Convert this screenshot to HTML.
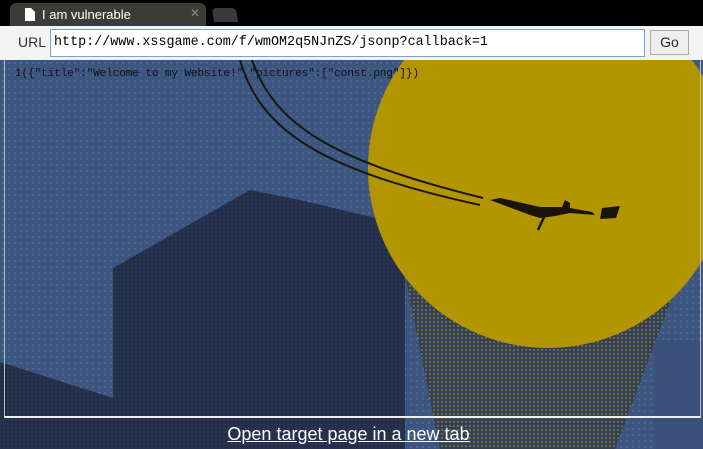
<!DOCTYPE html>
<html><head><meta charset="utf-8"><style>
html,body{margin:0;padding:0;width:703px;height:449px;overflow:hidden;background:#2a3858;font-family:"Liberation Sans",sans-serif}
#bg{position:absolute;left:0;top:0}
#top{position:absolute;left:0;top:0;width:703px;height:26px;background:#000}
#tab{position:absolute;left:10px;top:3px;width:196px;height:23px;background:#3b3b38;border-radius:6px 6px 0 0;color:#fff;font-size:13px}
#tab .t{position:absolute;left:32px;top:4px}
#tab .x{position:absolute;left:180px;top:3px;color:#888;font-size:12px}
#tab2{position:absolute;left:213px;top:8px;width:24px;height:14px;background:#3a3a3a;border-radius:4px 4px 0 0;transform:skewX(10deg)}
#bar{position:absolute;left:0;top:26px;width:703px;height:34px;background:#f3f3f3}
#url{position:absolute;left:18px;top:8px;font-size:14px;color:#333}
#in{position:absolute;left:50px;top:3px;background:#fff;border:1px solid #7a9ed6;font-family:"Liberation Mono",monospace;font-size:13.4px;line-height:25px;padding-left:3px;box-sizing:border-box;width:595px;height:28px}
#go{position:absolute;left:650px;top:4px;width:39px;height:25px;background:#eee;border:1px solid #aaa;box-sizing:border-box;font-size:14px;text-align:center;line-height:23px;color:#222}
#frame{position:absolute;left:4px;top:60px;width:697px;height:358px;border:1px solid #bbb;border-top:none;box-sizing:border-box;border-bottom:2px solid #eee}
#json{position:absolute;left:15px;top:68px;font-family:"Liberation Mono",monospace;font-size:11.2px;letter-spacing:-0.2px;color:#111}
#link{position:absolute;left:0;width:697px;top:424px;text-align:center;color:#fff;text-decoration:underline;font-size:18px}
</style></head><body>
<svg id="bg" width="703" height="449">
<defs>
<pattern id="d" width="4" height="4" patternUnits="userSpaceOnUse"><circle cx="2" cy="2" r="0.8" fill="#1a2236"/></pattern>
<pattern id="l" width="6" height="6" patternUnits="userSpaceOnUse"><circle cx="3" cy="3" r="0.9" fill="#5572a0"/></pattern>
<pattern id="y" width="4" height="4" patternUnits="userSpaceOnUse"><circle cx="2" cy="2" r="0.9" fill="#8a8a50"/></pattern>
</defs>
<rect width="703" height="449" fill="#3c5680"/>
<rect width="703" height="449" fill="url(#l)"/>
<polygon points="0,362 113,398 113,268 250,190 300,200 405,225 405,449 0,449" fill="#27324e"/>
<polygon points="0,362 113,398 113,268 250,190 300,200 405,225 405,449 0,449" fill="url(#d)"/>
<polygon points="400,250 690,250 615,449 440,449" fill="#343f52"/>
<polygon points="400,250 690,250 615,449 440,449" fill="url(#y)"/>
<rect x="655" y="340" width="48" height="109" fill="#3a5078"/>
<circle cx="548" cy="168" r="180" fill="#b39500"/>
<path d="M240,60 C260,130 320,170 480,205" stroke="#1a1510" stroke-width="2" fill="none"/>
<path d="M252,60 C275,125 330,160 483,198" stroke="#1a1510" stroke-width="2" fill="none"/>
<path d="M490,200 L500,198 L540,207 L562,207 L565,200 L570,203 L570,208 L592,212 L595,215 L570,213 L555,216 L540,218 L530,215 Z" fill="#1a1408"/>
<path d="M602,208 L620,206 L616,218 L600,219 Z" fill="#1a1408"/>
<path d="M545,215 L538,230" stroke="#1a1408" stroke-width="2.5"/>
</svg>
<div id="top"></div>
<div id="tab"><svg style="position:absolute;left:15px;top:5px" width="10" height="13"><path d="M0,0 H6 L10,4 V13 H0 Z" fill="#fff"/></svg><span class="t">I am vulnerable</span><span class="x">✕</span></div>
<div id="tab2"></div>
<div id="bar"><span id="url">URL</span><div id="in">http://www.xssgame.com/f/wmOM2q5NJnZS/jsonp?callback=1</div><div id="go">Go</div></div>
<div id="frame"></div>
<div id="json">1({"title":"Welcome to my Website!","pictures":["const.png"]})</div>
<div id="link">Open target page in a new tab</div>
</body></html>
